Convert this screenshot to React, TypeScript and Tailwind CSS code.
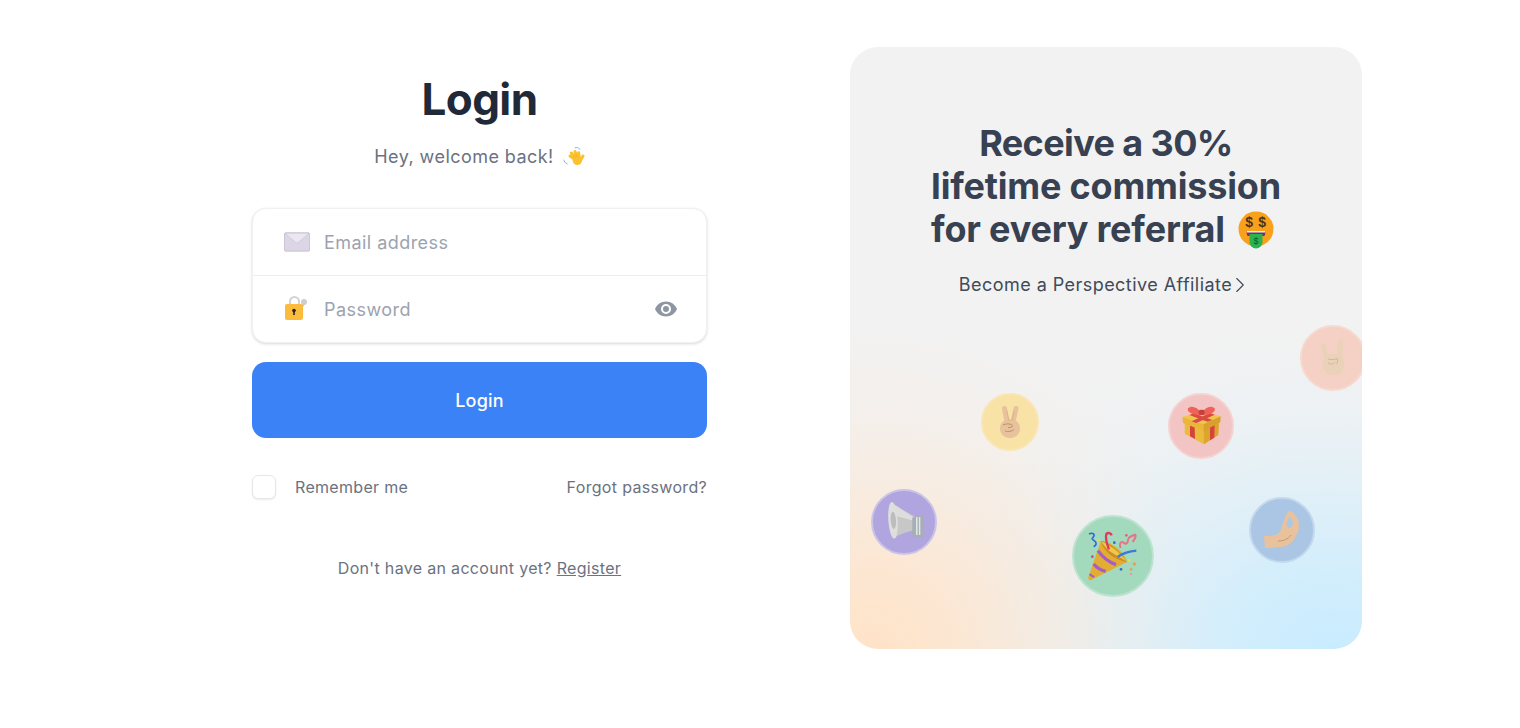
import { ChevronRight } from "lucide-react";

function Wave() {
  return (
    <svg viewBox="22 14 66 66" className="w-[22px] h-[22px] shrink-0">
      <path d="M24 56q2 9 11 12M58 19q9-4 15 5" stroke="#8db4f0" strokeWidth="3" fill="none" strokeLinecap="round" />
      <g stroke="#fcc22d" strokeWidth="9" strokeLinecap="round">
        <path d="M60 56L43 44M62 52L47 35M66 50L58 31M71 50L69 34M74 58L82 44" />
      </g>
      <circle cx="65" cy="57" r="14" fill="#fcc22d" />
      <path d="M53 42l8 8M60 39l5 9" stroke="#e6a01e" strokeWidth="1.500" fill="none" />
    </svg>
  );
}

function Envelope() {
  return (
    <svg viewBox="0 0 26 20" className="w-[26px] h-[20px] shrink-0">
      <rect x="0.500" y="0.800" width="25" height="18.400" rx="1" fill="#dbd5e5" stroke="#bdb6cb" strokeWidth="0.700" />
      <path d="M1 1.200h24L14.200 10.500c-.7.500-1.700.500-2.400 0z" fill="#ebe7f1" stroke="#c3bdd0" strokeWidth="0.500" />
    </svg>
  );
}

function Lock() {
  return (
    <svg viewBox="0 0 26 26" className="w-[26px] h-[26px] shrink-0">
      <circle cx="20" cy="6" r="3" fill="#cdcdcd" />
      <path d="M18.500 8l-3.500 6.500 1.800 1 3.400-6.500z" fill="#c2c2c2" />
      <path d="M6 9V5.500a4.500 4.500 0 0 1 9 0V9" fill="none" stroke="#d2d2d2" strokeWidth="2" />
      <rect x="1" y="8" width="18" height="16" rx="2" fill="#fbbc3d" />
      <circle cx="10" cy="14.500" r="1.800" fill="#2a2118" />
      <rect x="9.200" y="15" width="1.600" height="4" fill="#2a2118" />
    </svg>
  );
}

function Eye() {
  return (
    <svg viewBox="0 0 24 24" className="w-[24px] h-[24px] shrink-0" fill="#8f96a3">
      <path d="M12 4.500C7 4.500 2.700 7.600 1 12c1.700 4.400 6 7.500 11 7.500s9.300-3.100 11-7.500c-1.700-4.400-6-7.500-11-7.500zm0 12.500a5 5 0 1 1 0-10 5 5 0 0 1 0 10zm0-8a3 3 0 1 0 0 6 3 3 0 0 0 0-6z" />
    </svg>
  );
}

function MoneyFace() {
  return (
    <svg viewBox="0 0 36 38" className="w-[36px] h-[38px] shrink-0">
      <circle cx="18" cy="18" r="17.500" fill="#f9a11b" />
      <path d="M8 20h20l-1.500 5h-17z" fill="#7b2d63" />
      <path d="M8.500 20h19v1.500h-19z" fill="#f3eef2" />
      <path d="M11.500 23h13v8a6.500 6.500 0 0 1-13 0z" fill="#2cb34f" />
      <text x="18" y="33" textAnchor="middle" fontSize="9" fontWeight="400" fill="#0b5a25" fontFamily="Liberation Sans, sans-serif">$</text>
      <text x="11" y="16" textAnchor="middle" fontSize="14" fontWeight="700" fill="#4a3420" fontFamily="Liberation Sans, sans-serif">$</text>
      <text x="24" y="16" textAnchor="middle" fontSize="14" fontWeight="700" fill="#4a3420" fontFamily="Liberation Sans, sans-serif">$</text>
    </svg>
  );
}

function Peace() {
  return (
    <svg viewBox="0 0 24 34" className="w-[24px] h-[34px]">
      <g stroke="#e8c29c" strokeWidth="5" strokeLinecap="round">
        <path d="M6.500 3.500L9 17M18 3.500L15 17" />
      </g>
      <rect x="2" y="14" width="20" height="19" rx="9" fill="#e8c29c" />
      <path d="M9 6l2 10M16 6l-2 10" stroke="#d6a87f" strokeWidth="0.600" />
      <path d="M5 20c3-1.500 7-1.500 9 0 1.500 1.500-1 3-4 2.500M7 26c3 1 7 .5 9-1.500" stroke="#b98a5f" strokeWidth="0.900" fill="none" />
    </svg>
  );
}

function Gift() {
  return (
    <svg viewBox="0 0 222 222" className="w-[74px] h-[74px] shrink-0">
      <path d="M62 100l56 22 2 44-58-32z" fill="#eabb3c" />
      <path d="M118 122l47-20-2 36-43 28z" fill="#dca52c" />
      <path d="M78 108l14 6 1 36-15-8zM138 114l14-6-1 38-13 8z" fill="#d6433f" />
      <path d="M55 84l58-18 57 16-52 24z" fill="#f2c64e" />
      <path d="M55 84l63 22 1 20-62-24z" fill="#e9b53a" />
      <path d="M118 106l52-24-1 18-50 26z" fill="#d9a02c" />
      <path d="M76 78l14-5 55 20-14 5zM138 72l14 5-55 25-14-5z" fill="#d94a44" />
      <path d="M112 72c-12-18-30-24-40-14-4 10 10 20 36 20zM114 72c10-18 28-24 38-14 4 10-10 20-34 20z" fill="#ef6259" />
      <rect x="104" y="62" width="18" height="16" rx="6" fill="#c63f3b" />
    </svg>
  );
}

function Rock() {
  return (
    <svg viewBox="0 0 26 38" className="w-[26px] h-[38px] shrink-0">
      <g stroke="#ead2b9" strokeWidth="5" strokeLinecap="round">
        <path d="M3.500 7L7 21M20.500 3L19.500 20" />
      </g>
      <rect x="3" y="15" width="21" height="21" rx="9" fill="#ead2b9" />
      <path d="M8 20c3 1 7 .5 10-.5M8 24c3 2 6 1 7-1M17 20c1 2 1 4-1 5" stroke="#cdb094" strokeWidth="0.800" fill="none" />
    </svg>
  );
}

function Megaphone() {
  return (
    <svg viewBox="0 0 222 222" className="w-[74px] h-[74px] shrink-0">
      <path d="M72 52c24 14 46 30 70 42v42c-22 4-44 12-62 24z" fill="#c6c7c6" />
      <path d="M78 58c20 12 40 24 60 38l-2 10c-20-6-40-10-60-16z" fill="#dcdddc" />
      <ellipse cx="78" cy="106" rx="14" ry="55" fill="#dededd" transform="rotate(-4 78 106)" />
      <ellipse cx="79" cy="106" rx="8" ry="26" fill="#bcbdbd" transform="rotate(-4 79 106)" />
      <path d="M136 98l28-8 6 6v60l-6 2-28-4z" fill="#a7aeb6" />
      <rect x="147" y="96" width="13" height="54" fill="#e2e5e8" />
      <rect x="152" y="96" width="3" height="54" fill="#949ba4" />
    </svg>
  );
}

function Party() {
  return (
    <svg viewBox="0 0 264 264" className="w-[88px] h-[88px] shrink-0">
      <path d="M58 196L96 86c38 6 70 34 78 64L66 204c-5 2-10-2-8-8z" fill="#e3ad34" />
      <path d="M96 86c20 4 60 30 78 64-34-6-72-30-78-64z" fill="#c98f20" />
      <path d="M96 88c24 8 60 36 76 60-16-10-36-20-50-30-10-8-20-20-26-30z" fill="#f0c64e" />
      <path d="M87 116c12 18 32 34 54 42" stroke="#a55fc4" strokeWidth="10" fill="none" />
      <path d="M74 156c8 10 20 18 36 22" stroke="#a55fc4" strokeWidth="10" fill="none" />
      <path d="M62 186c4 4 8 7 14 9" stroke="#a55fc4" strokeWidth="7" fill="none" />
      <path d="M60 66c12-6 20 2 12 10-8 6 6 10 8 14 4 8-2 12-6 14" stroke="#2f69d8" strokeWidth="5" fill="none" />
      <path d="M120 112c-6-16-12-30-8-46 4-6 14-2 16 4" stroke="#e1385f" strokeWidth="7" fill="none" />
      <path d="M155 108c-4-10-2-18 4-18s8 8 14 4 2-14 8-18 12-8 18-8c4 8-4 14-8 22" stroke="#e5748a" strokeWidth="6" fill="none" />
      <path d="M146 134c16-10 34-16 56-18" stroke="#3a7ae0" strokeWidth="7" fill="none" />
      <circle cx="136" cy="92" r="4" fill="#2f69d8" />
      <circle cx="88" cy="84" r="4" fill="#f4d94e" />
      <circle cx="70" cy="134" r="4" fill="#d9456a" />
      <circle cx="172" cy="70" r="4" fill="#d9647e" />
      <circle cx="180" cy="146" r="4" fill="#f4d94e" />
      <circle cx="156" cy="172" r="4" fill="#2f69d8" />
      <circle cx="196" cy="156" r="5" fill="#e8a050" />
      <circle cx="186" cy="172" r="4" fill="#e8a050" />
      <circle cx="186" cy="186" r="4" fill="#e99aa8" />
    </svg>
  );
}

function Pinch() {
  return (
    <svg viewBox="0 0 36 38" className="w-[36px] h-[38px] shrink-0">
      <path d="M0 25c5 0 9-.5 12-1.500 3-1 4.500-3 5.500-6.500 1-4 3-11 7-16.500 1-1 2.500-.5 3.500.5 4 3 7 8 7 13 0 4-1 8-3 11-2.500 5-6 9-12 10.500-6 1-14 1.500-19 1.500z" fill="#e8c29c" />
      <path d="M26 6c-2.500 2-4 6-3 9 1 2.500 3.500 2.500 5 .5 1.500-2.500 .5-7-2-9.500z" fill="#a9c8e6" />
      <path d="M14 30c5 0 10-1.500 13-6" stroke="#c4936a" strokeWidth="0.900" fill="none" />
    </svg>
  );
}

const badges = [
  { id: "peace", cls: "left-[131px] top-[346px] w-[58px] h-[58px] bg-[#f8e2a6] border-[#f9e6b4]", icon: <Peace /> },
  { id: "gift", cls: "left-[318px] top-[346px] w-[66px] h-[66px] bg-[#f2c5c4] border-[#f5d2d0]", icon: <Gift /> },
  { id: "rock", cls: "left-[450px] top-[278px] w-[66px] h-[66px] bg-[#f5d0c4] border-[#f6dad0]", icon: <Rock /> },
  { id: "mega", cls: "left-[21px] top-[442px] w-[66px] h-[66px] bg-[#b0a5de] border-[#cbc4e8]", icon: <Megaphone /> },
  { id: "party", cls: "left-[222px] top-[468px] w-[82px] h-[82px] bg-[#a3d9bc] border-[#bde3d0]", icon: <Party /> },
  { id: "pinch", cls: "left-[399px] top-[450px] w-[66px] h-[66px] bg-[#aac6e4] border-[#c3d8ec]", icon: <Pinch /> },
];

export default function App() {
  return (
    <div className="min-h-[728px] bg-white flex pl-[252px] pt-[47px] gap-[143px] font-['Inter',sans-serif]">
      <div className="w-[455px] flex flex-col">
        <h1 className="mt-[23px] text-center text-[44px] leading-[58px] font-bold tracking-[-0.6px] text-[#1f2937]">Login</h1>
        <p className="mt-[15px] flex justify-center items-center gap-[9px] text-[18px] leading-[28px] tracking-[0.45px] text-[#6b7280]">
          Hey, welcome back! <Wave />
        </p>
        <div className="mt-[37px] rounded-[14px] border border-[#eef0f2] shadow-[0_1px_3px_rgba(0,0,0,0.15)] bg-white">
          <label className="h-[67px] flex items-center pl-[31px] pr-[28px] gap-[14px] border-b border-[#eceef0]">
            <Envelope />
            <input className="flex-1 outline-none text-[18px] tracking-[0.45px] placeholder:text-[#9ca3af]" placeholder="Email address" />
          </label>
          <label className="h-[66px] flex items-center pl-[31px] pr-[28px] gap-[14px]">
            <Lock />
            <input className="flex-1 outline-none text-[18px] tracking-[0.45px] placeholder:text-[#9ca3af]" placeholder="Password" type="password" />
            <Eye />
          </label>
        </div>
        <button className="mt-[19px] h-[76px] rounded-[14px] bg-[#3b82f6] text-white text-[18px] font-medium tracking-[0.2px]">Login</button>
        <div className="mt-[37px] flex items-center justify-between text-[16px] tracking-[0.32px] text-[#6b7280]">
          <label className="flex items-center gap-[19px]">
            <span className="w-[24px] h-[24px] rounded-[6px] border border-[#e5e7eb] shadow-[0_1px_2px_rgba(0,0,0,0.08)] bg-white" />
            Remember me
          </label>
          <a>Forgot password?</a>
        </div>
        <p className="mt-[57px] text-center text-[16px] leading-[24px] tracking-[0.32px] text-[#6b7280]">
          Don't have an account yet? <a className="underline">Register</a>
        </p>
      </div>

      <div className="relative w-[512px] h-[602px] rounded-[28px] overflow-hidden bg-[#f2f2f2] bg-[radial-gradient(ellipse_340px_330px_at_4%_100%,#ffe3c8_0%,rgba(255,227,200,0.75)_25%,rgba(255,227,200,0.4)_50%,rgba(255,227,200,0.12)_75%,rgba(255,227,200,0)_100%),radial-gradient(ellipse_400px_320px_at_94%_100%,#c8ecff_0%,rgba(200,236,255,0.75)_25%,rgba(200,236,255,0.4)_50%,rgba(200,236,255,0.12)_75%,rgba(200,236,255,0)_100%)]">
        <h2 className="mt-[75px] text-center text-[36px] leading-[43px] font-bold tracking-[-0.2px] text-[#374151]">
          <span className="tracking-[-0.6px]">Receive a 30%</span><br />
          lifetime commission<br />
          <span className="inline-flex items-center gap-[13px] mr-[7px]">for every referral <MoneyFace /></span>
        </h2>
        <p className="mt-[20px] flex justify-center items-center text-[18px] leading-[28px] tracking-[0.45px] text-[#414a58]">
          Become a Perspective Affiliate <ChevronRight className="w-[26px] h-[26px] ml-[-5px] text-[#414a58]" strokeWidth={1} />
        </p>
        {badges.map((b) => (
          <div key={b.id} className={`absolute rounded-full border-2 flex items-center justify-center ${b.cls}`}>
            {b.icon}
          </div>
        ))}
      </div>
    </div>
  );
}
